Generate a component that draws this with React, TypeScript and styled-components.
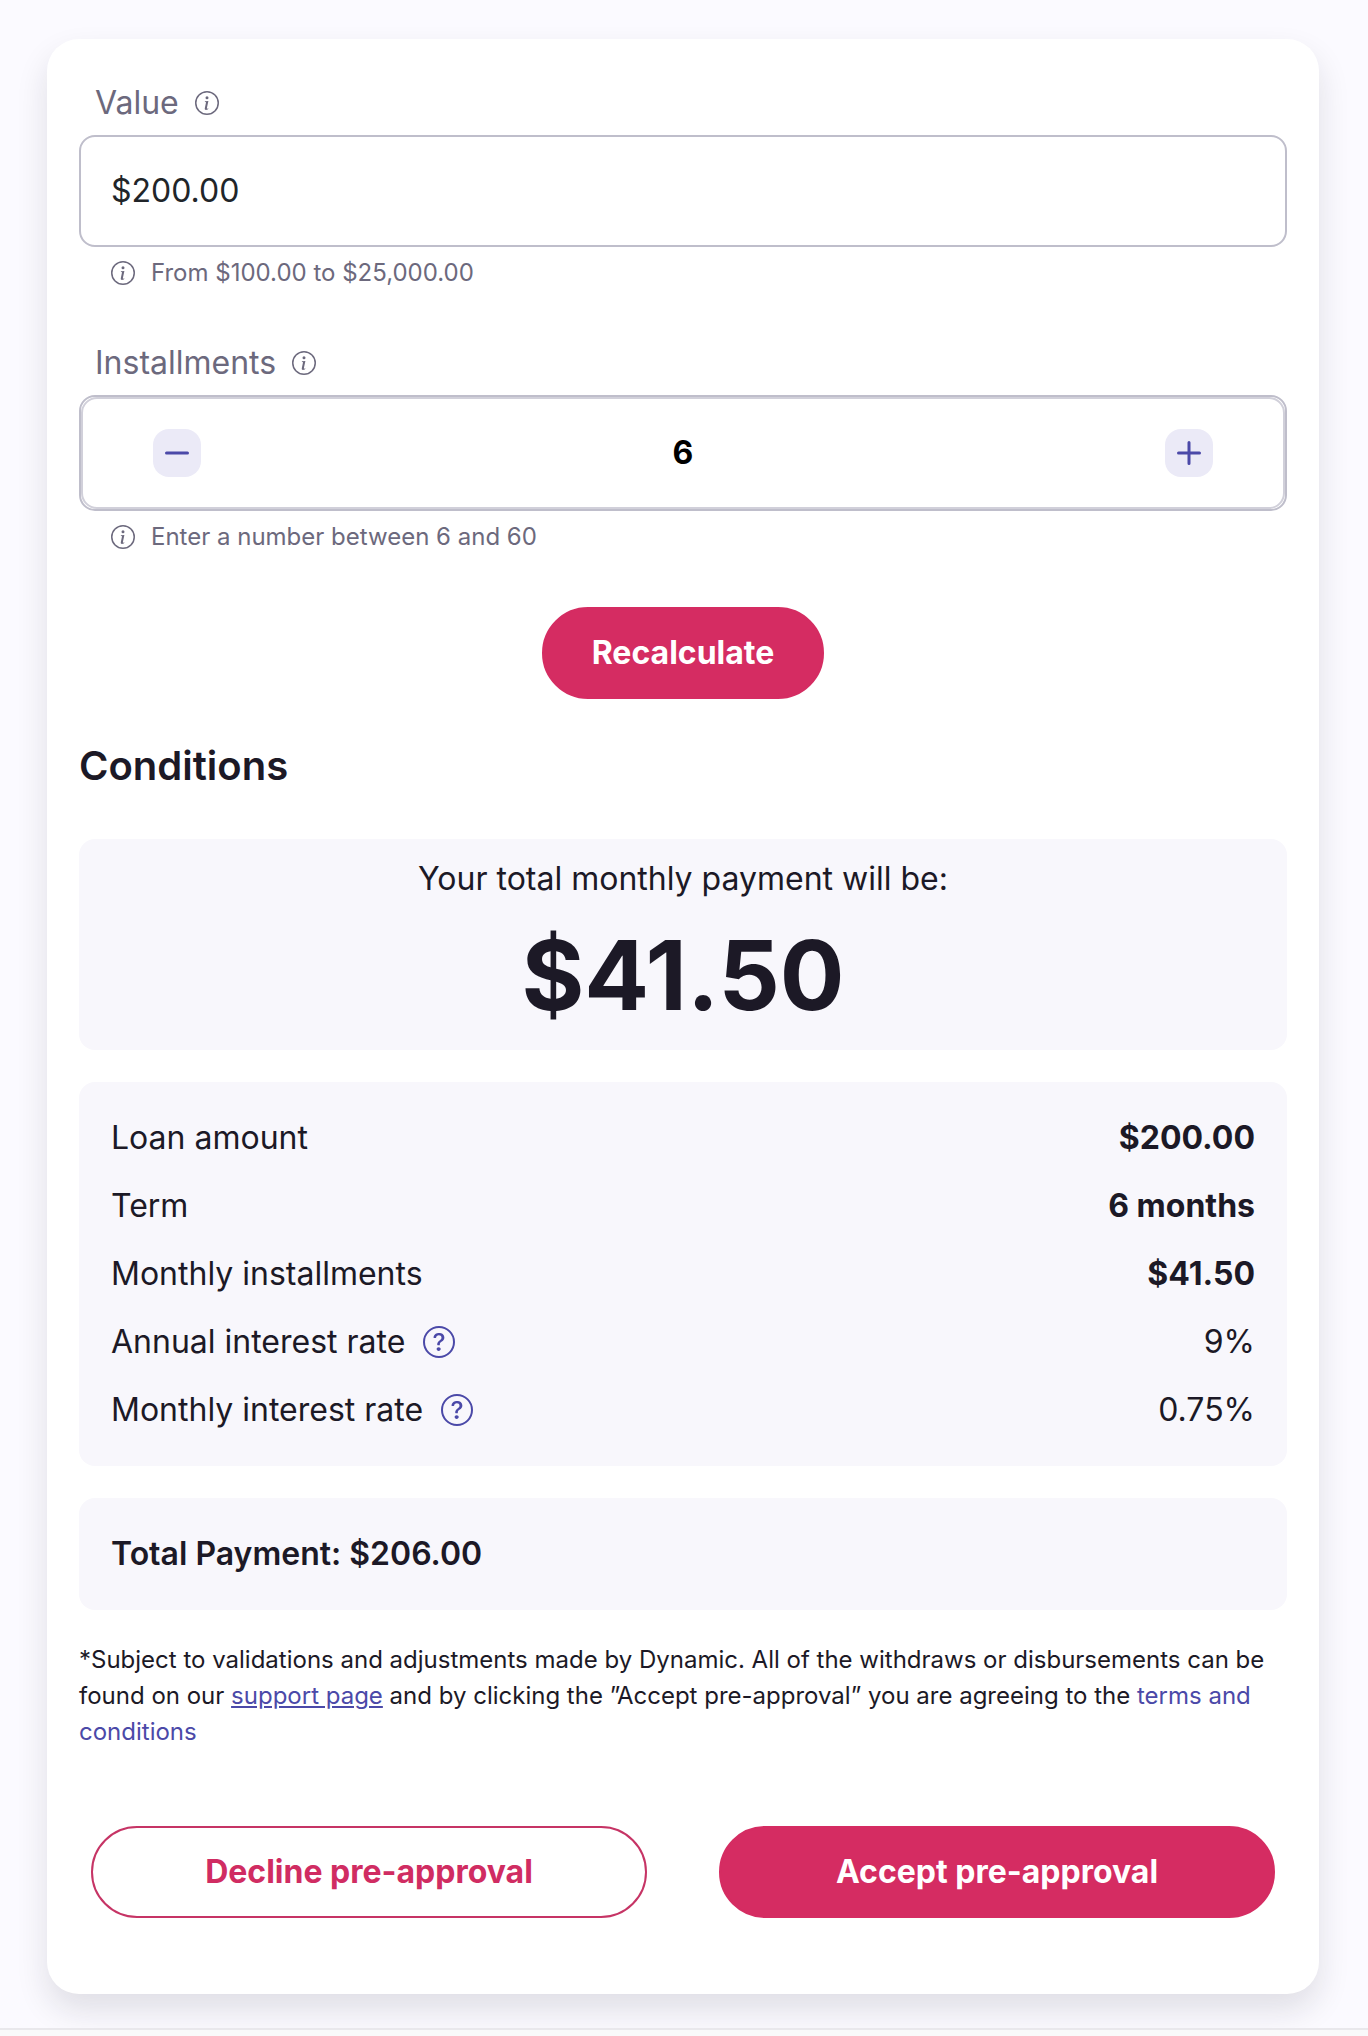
import { useState, type ReactNode } from "react";
import styled, { createGlobalStyle } from "styled-components";

const GlobalStyle = createGlobalStyle`
  *, *::before, *::after { box-sizing: border-box; }
  html { min-height: 100%; background: #f9f9fa; }
  body {
    margin: 0;
    font-family: Inter, "Liberation Sans", sans-serif;
    font-size: 32px;
    line-height: 48px;
    font-optical-sizing: none;
    color: #1c1926;
  }
`;

const Page = styled.main`
  padding: 39px 49px 34px 47px;
  background: #fbfaff;
  border-bottom: 2px solid #e9e8ec;
  overflow: hidden;
`;

const Card = styled.form`
  display: flex;
  flex-direction: column;
  padding: 40px 32px 76px;
  border-radius: 32px;
  background: #fff;
  box-shadow: 0 16px 32px rgba(28, 25, 38, 0.12);
`;

const Field = styled.div`
  display: flex;
  flex-direction: column;
  margin-bottom: 48px;
`;

const LabelRow = styled.div`
  display: flex;
  align-items: center;
  gap: 16px;
  padding: 0 16px;
  margin-bottom: 8px;
  color: #6c697d;
`;

const Hint = styled.p`
  display: flex;
  align-items: center;
  gap: 16px;
  margin: 8px 0 0;
  padding: 0 32px;
  font-size: 24px;
  line-height: 36px;
  color: #6c697d;
`;

const ValueInput = styled.input`
  width: 100%;
  height: 112px;
  padding: 0 30px 2px;
  border: 2px solid #bfbecb;
  border-radius: 16px;
  background: #fff;
  font: inherit;
  color: #212529;
`;

const Stepper = styled.div`
  display: flex;
  border: 2px solid #bfbecb;
  border-radius: 16px;
`;

const StepperInner = styled.div`
  flex: 1;
  display: flex;
  align-items: center;
  gap: 16px;
  min-width: 0;
  height: 112px;
  padding: 0 70px;
  border: 2px solid #d1d0da;
  border-radius: 16px;
`;

const StepperInput = styled.input`
  flex: 1;
  min-width: 0;
  border: 0;
  padding: 0;
  background: transparent;
  font: inherit;
  font-weight: 700;
  text-align: center;
  color: #000;
`;

const StepButton = styled.button`
  display: grid;
  place-items: center;
  width: 48px;
  height: 48px;
  padding: 0;
  border: 0;
  border-radius: 16px;
  background: #ebeaf7;
  color: #4b49a8;
  cursor: pointer;
`;

const PillButton = styled.button<{ $outline?: boolean }>`
  height: 92px;
  padding: 0 48px;
  border: 2px solid ${(p) => (p.$outline ? "#c63465" : "#d52c62")};
  border-radius: 46px;
  background: ${(p) => (p.$outline ? "#fff" : "#d52c62")};
  color: ${(p) => (p.$outline ? "#d02c62" : "#fff")};
  font: inherit;
  font-weight: 700;
  cursor: pointer;
`;

const Center = styled.div`
  display: flex;
  justify-content: center;
  padding-top: 4px;
`;

const Heading = styled.h2`
  margin: 37px 0 43px;
  font-size: 40px;
  line-height: 60px;
  font-weight: 600;
`;

const Panel = styled.section`
  margin-bottom: 32px;
  padding: 22px 32px;
  border-radius: 16px;
  background: #f8f7fc;
`;

const PaymentPanel = styled(Panel)`
  padding: 16px 32px 15px;
  text-align: center;
`;

const PaymentAmount = styled.strong`
  display: block;
  margin-top: 12px;
  font-size: 96px;
  line-height: 120px;
  font-weight: 700;
`;

const Rows = styled.dl`
  margin: 0;
`;

const Row = styled.div`
  display: flex;
  align-items: center;
  justify-content: space-between;
  height: 68px;
`;

const RowLabel = styled.dt`
  display: flex;
  align-items: center;
  gap: 18px;
`;

const RowValue = styled.dd<{ $strong?: boolean }>`
  margin: 0;
  font-weight: ${(p) => (p.$strong ? 700 : 400)};
`;

const TotalPanel = styled(Panel)`
  padding: 32px;
  font-weight: 600;
`;

const Footnote = styled.p`
  margin: 0 0 76px;
  font-size: 24px;
  line-height: 36px;
`;

const TextLink = styled.a<{ $underline?: boolean }>`
  color: #4b49a8;
  text-decoration: ${(p) => (p.$underline ? "underline" : "none")};
`;

const Actions = styled.div`
  display: grid;
  grid-template-columns: 1fr 1fr;
  gap: 72px;
  padding: 0 12px;
`;

const IconButton = styled.button`
  display: flex;
  padding: 0;
  border: 0;
  background: none;
  color: #4b49a8;
  cursor: pointer;
`;

const InfoIcon = () => (
  <svg width="24" height="24" viewBox="0 0 16 16" fill="currentColor" aria-hidden="true">
    <path d="M8 15A7 7 0 1 1 8 1a7 7 0 0 1 0 14m0 1A8 8 0 1 0 8 0a8 8 0 0 0 0 16" />
    <path d="m8.93 6.588-2.29.287-.082.38.45.083c.294.07.352.176.288.469l-.738 3.468c-.194.897.105 1.319.808 1.319.545 0 1.178-.252 1.465-.598l.088-.416c-.2.176-.492.246-.686.246-.275 0-.375-.193-.304-.533zM9 4.5a1 1 0 1 1-2 0 1 1 0 0 1 2 0" />
  </svg>
);

const HelpIcon = () => (
  <svg width="32" height="32" viewBox="0 0 16 16" fill="currentColor" aria-hidden="true">
    <path d="M8 15A7 7 0 1 1 8 1a7 7 0 0 1 0 14m0 1A8 8 0 1 0 8 0a8 8 0 0 0 0 16" />
    <path d="M5.255 5.786a.237.237 0 0 0 .241.247h.825c.138 0 .248-.113.266-.25.09-.656.54-1.134 1.342-1.134.686 0 1.314.343 1.314 1.168 0 .635-.374.927-.965 1.371-.673.489-1.206 1.06-1.168 1.987l.003.217a.25.25 0 0 0 .25.246h.811a.25.25 0 0 0 .25-.25v-.105c0-.718.273-.927 1.01-1.486.609-.463 1.244-.977 1.244-2.056 0-1.511-1.276-2.241-2.673-2.241-1.267 0-2.655.59-2.75 2.286m1.557 5.763c0 .533.425.927 1.01.927.609 0 1.028-.394 1.028-.927 0-.552-.42-.94-1.029-.94-.584 0-1.009.388-1.009.94" />
  </svg>
);

const StepIcon = ({ plus }: { plus?: boolean }) => (
  <svg width="24" height="24" viewBox="0 0 24 24" fill="none" stroke="currentColor" strokeWidth="3" strokeLinecap="round" aria-hidden="true">
    <path d={plus ? "M1.5 12h21M12 1.5v21" : "M1.5 12h21"} />
  </svg>
);

type Condition = { label: string; value: string; strong?: boolean; help?: boolean };

const conditions: Condition[] = [
  { label: "Loan amount", value: "$200.00", strong: true },
  { label: "Term", value: "6 months", strong: true },
  { label: "Monthly installments", value: "$41.50", strong: true },
  { label: "Annual interest rate", value: "9%", help: true },
  { label: "Monthly interest rate", value: "0.75%", help: true },
];

const FieldLabel = ({ htmlFor, children }: { htmlFor: string; children: ReactNode }) => (
  <LabelRow>
    <label htmlFor={htmlFor}>{children}</label>
    <InfoIcon />
  </LabelRow>
);

export default function App() {
  const [value, setValue] = useState("$200.00");
  const [count, setCount] = useState(6);
  const step = (by: number) => setCount((n) => Math.min(60, Math.max(6, n + by)));

  return (
    <>
      <GlobalStyle />
      <Page>
        <Card onSubmit={(e) => e.preventDefault()}>
          <Field>
            <FieldLabel htmlFor="value">Value</FieldLabel>
            <ValueInput id="value" value={value} onChange={(e) => setValue(e.target.value)} />
            <Hint>
              <InfoIcon />
              From $100.00 to $25,000.00
            </Hint>
          </Field>
          <Field>
            <FieldLabel htmlFor="installments">Installments</FieldLabel>
            <Stepper>
              <StepperInner>
                <StepButton type="button" aria-label="Decrease" onClick={() => step(-1)}>
                  <StepIcon />
                </StepButton>
                <StepperInput
                  id="installments"
                  inputMode="numeric"
                  value={count}
                  onChange={(e) => setCount(Number(e.target.value) || 0)}
                />
                <StepButton type="button" aria-label="Increase" onClick={() => step(1)}>
                  <StepIcon plus />
                </StepButton>
              </StepperInner>
            </Stepper>
            <Hint>
              <InfoIcon />
              Enter a number between 6 and 60
            </Hint>
          </Field>
          <Center>
            <PillButton type="submit">Recalculate</PillButton>
          </Center>
          <Heading>Conditions</Heading>
          <PaymentPanel>
            Your total monthly payment will be:
            <PaymentAmount>$41.50</PaymentAmount>
          </PaymentPanel>
          <Panel>
            <Rows>
              {conditions.map((c) => (
                <Row key={c.label}>
                  <RowLabel>
                    {c.label}
                    {c.help && (
                      <IconButton type="button" aria-label={`About ${c.label.toLowerCase()}`}>
                        <HelpIcon />
                      </IconButton>
                    )}
                  </RowLabel>
                  <RowValue $strong={c.strong}>{c.value}</RowValue>
                </Row>
              ))}
            </Rows>
          </Panel>
          <TotalPanel>Total Payment: $206.00</TotalPanel>
          <Footnote>
            *Subject to validations and adjustments made by Dynamic. All of the withdraws or
            disbursements can be found on our{" "}
            <TextLink href="#support" $underline>
              support page
            </TextLink>{" "}
            and by clicking the ”Accept pre-approval” you are agreeing to the{" "}
            <TextLink href="#terms">terms and conditions</TextLink>
          </Footnote>
          <Actions>
            <PillButton type="button" $outline>
              Decline pre-approval
            </PillButton>
            <PillButton type="button">Accept pre-approval</PillButton>
          </Actions>
        </Card>
      </Page>
    </>
  );
}
